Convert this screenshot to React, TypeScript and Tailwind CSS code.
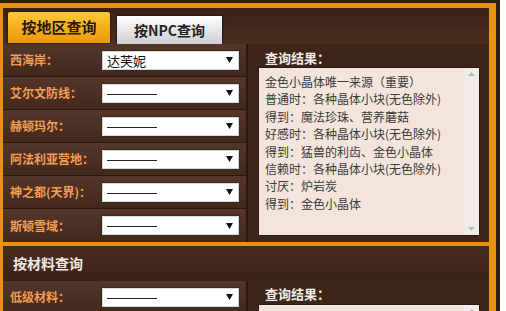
import React from "react";

const font = { fontFamily: '"Noto Sans CJK SC", "Noto Sans", sans-serif' };

function Select({ value }: { value?: string }) {
  return (
    <div className="w-[139px] h-[21px] bg-white border border-[#3a2a20] flex items-center pl-[5px] pr-[6px] shadow-[inset_0_0_0_1px_#d8d8d8]">
      <div className="flex-1 flex items-center">
        {value ? (
          <span className="text-[13px] leading-none text-[#111]">{value}</span>
        ) : (
          <span className="block w-[50px] h-[1px] bg-[#222] mt-[2px]" />
        )}
      </div>
      <svg width="7" height="6" viewBox="0 0 7 6">
        <path d="M0 0 L7 0 L3.5 6 Z" fill="#111" />
      </svg>
    </div>
  );
}

function Row({ label, value, last }: { label: string; value?: string; last?: boolean }) {
  return (
    <div
      className={`h-[33px] flex items-center bg-gradient-to-b from-[#54372a] to-[#42291c] ${
        last ? "" : "border-b border-[#2a1810]"
      }`}
    >
      <div className="w-[98px] pl-[7px] text-[12px] font-bold text-[#f39d55] whitespace-nowrap">{label}</div>
      <Select value={value} />
    </div>
  );
}

function ResultBox({ lines, h }: { lines: string[]; h: number }) {
  return (
    <div
      className="ml-[10px] w-[222px] bg-[#f3e5dc] border border-[#2a1a12] flex"
      style={{ height: h }}
    >
      <div className="flex-1 pl-[6px] pt-[5px] text-[12px] leading-[17.4px] text-[#3a3a3a]">
        {lines.map((l, i) => (
          <div key={i} className="whitespace-nowrap">{l}</div>
        ))}
      </div>
      <div className="w-[15px] flex flex-col justify-between items-center py-[4px] bg-[#f1ece8]">
        <svg width="7" height="4" viewBox="0 0 7 4">
          <path d="M0 4 L7 4 L3.5 0 Z" fill="#b8b8b8" />
        </svg>
        <svg width="7" height="4" viewBox="0 0 7 4">
          <path d="M0 0 L7 0 L3.5 4 Z" fill="#b8b8b8" />
        </svg>
      </div>
    </div>
  );
}

export default function App() {
  const lines = [
    "金色小晶体唯一来源（重要）",
    "普通时：各种晶体小块(无色除外)",
    "得到：魔法珍珠、营养蘑菇",
    "好感时：各种晶体小块(无色除外)",
    "得到：猛兽的利齿、金色小晶体",
    "信赖时：各种晶体小块(无色除外)",
    "讨厌：炉岩炭",
    "得到：金色小晶体",
  ];
  return (
    <div className="w-[506px] h-[311px] overflow-hidden bg-white" style={font}>
      <div className="w-[500px] h-[311px] bg-[#2e1c12] pt-[3px] pr-[4px]">
        <div className="border-l-[3px] border-r-[7px] border-t-[5px] border-[#e8930f] bg-[#3a2318]">
          {/* Section 1 */}
          <div className="bg-gradient-to-b from-[#3c2418] via-[#4a2e20] to-[#3a2318]">
            <div className="h-[36px] flex items-end pl-[5px] gap-[7px] bg-gradient-to-b from-[#3a2216] to-[#4a2e20]">
              <div className="w-[102px] h-[31px] mb-[1px] rounded-t-[2px] bg-gradient-to-b from-[#fcc832] to-[#e99800] flex items-center justify-center text-[15px] font-bold text-[#2a1a0c] shadow-[0_0_2px_#000]">
                按地区查询
              </div>
              <div className="w-[105px] h-[28px] bg-gradient-to-b from-[#ffffff] to-[#cfcfd4] flex items-center justify-center text-[14px] font-bold text-[#222] shadow-[0_0_2px_#000]">
                按NPC查询
              </div>
            </div>
            <div className="flex">
              <div className="w-[245px] border-r-[2px] border-[#2a1810]">
                <Row label="西海岸：" value="达芙妮" />
                <Row label="艾尔文防线：" />
                <Row label="赫顿玛尔：" />
                <Row label="阿法利亚营地：" />
                <Row label="神之都(天界)：" />
                <Row label="斯顿雪域：" last />
              </div>
              <div className="flex-1 bg-[#3e2519]">
                <div className="h-[23px] pl-[17px] pt-[4px] text-[13px] font-bold text-[#f4ece6]">查询结果：</div>
                <ResultBox lines={lines} h={169} />
              </div>
            </div>
          </div>
          {/* divider */}
          <div className="h-[4px] bg-[#e8930f]" />
          {/* Section 2 */}
          <div>
            <div className="h-[35px] flex items-center pl-[10px] bg-gradient-to-b from-[#4a2c1e] to-[#3a2217] text-[14px] font-bold text-[#f2e8e0]">
              按材料查询
            </div>
            <div className="flex">
              <div className="w-[245px] border-r-[2px] border-[#2a1810]">
                <Row label="低级材料：" />
              </div>
              <div className="flex-1 bg-[#3e2519]">
                <div className="h-[23px] pl-[17px] pt-[3px] text-[13px] font-bold text-[#f4ece6]">查询结果：</div>
                <ResultBox lines={[]} h={40} />
              </div>
            </div>
          </div>
        </div>
      </div>
    </div>
  );
}
